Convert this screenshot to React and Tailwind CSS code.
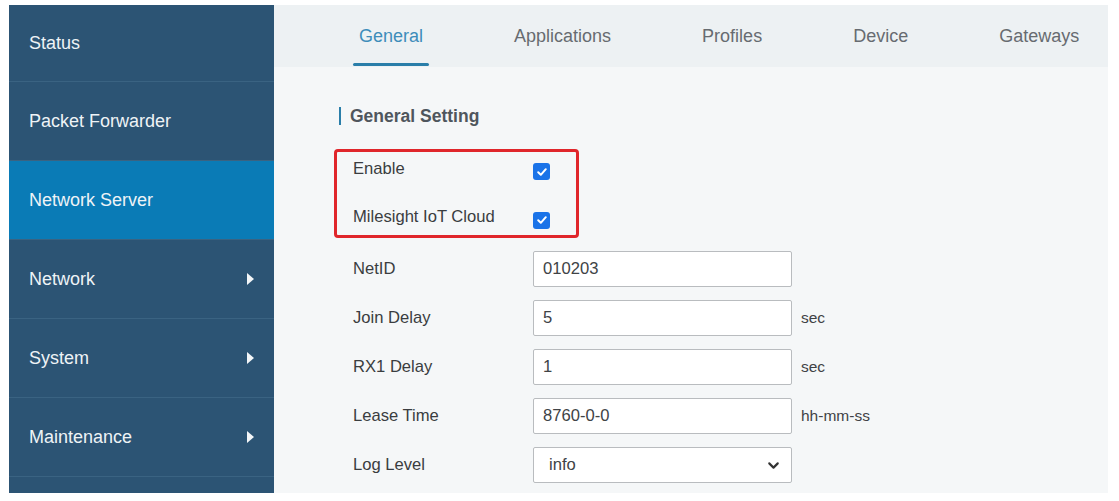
import { ChevronDown } from 'lucide-react'

const menu = [
  { label: 'Status', h: 'h-[77px]' },
  { label: 'Packet Forwarder' },
  { label: 'Network Server', active: true },
  { label: 'Network', arrow: true },
  { label: 'System', arrow: true },
  { label: 'Maintenance', arrow: true },
]

const tabs = ['General', 'Applications', 'Profiles', 'Device', 'Gateways']

const fields = [
  { label: 'NetID', value: '010203' },
  { label: 'Join Delay', value: '5', unit: 'sec' },
  { label: 'RX1 Delay', value: '1', unit: 'sec' },
  { label: 'Lease Time', value: '8760-0-0', unit: 'hh-mm-ss' },
]

const Check = () => (
  <div className="w-[17px] h-[17px] rounded-[3px] bg-[#1a73e8] flex items-center justify-center">
    <svg width="12" height="12" viewBox="0 0 12 12" fill="none">
      <path d="M2.2 6.3 L4.8 8.8 L9.8 3.2" stroke="white" strokeWidth="2" strokeLinecap="round" strokeLinejoin="round" />
    </svg>
  </div>
)

const Arrow = () => (
  <svg width="9" height="14" viewBox="0 0 9 14" className="mr-[19px]">
    <path d="M1 1 L8 7 L1 13 Z" fill="#f3f6f8" />
  </svg>
)

export default function App() {
  return (
    <div className="w-[1119px] h-[501px] bg-white pt-[5px] pl-[9px] flex font-['Liberation_Sans',Arial,sans-serif] overflow-hidden">
      {/* sidebar */}
      <div className="w-[265px] h-[488px] bg-[#2c5474] flex flex-col">
        {menu.map((m) => (
          <div
            key={m.label}
            className={`${m.h || 'h-[79px]'} shrink-0 flex items-center justify-between pl-[20px] text-[18px] text-[#eef3f6] border-b border-[#3a6382] ${m.active ? 'bg-[#0a7bb6] border-[#0a7bb6]' : ''}`}
          >
            <span>{m.label}</span>
            {m.arrow && <Arrow />}
          </div>
        ))}
        <div className="flex-1" />
      </div>

      {/* main panel */}
      <div className="w-[834px] h-[488px] bg-[#f5f7f8] flex flex-col">
        <div className="h-[62px] bg-[#edf1f3] flex items-stretch pl-[79px] gap-[79px]">
          {tabs.map((t, i) => (
            <div
              key={t}
              className={`px-[6px] flex items-center text-[18px] pt-[1px] relative ${i === 0 ? 'text-[#3d8dba]' : 'text-[#676b70]'}`}
            >
              {t}
              {i === 0 && <div className="absolute left-0 right-0 bottom-[1px] h-[3px] bg-[#2a7ea9] rounded-full" />}
            </div>
          ))}
        </div>

        <div className="pl-[65px] pt-[39px]">
          <div className="flex items-center h-[20px]">
            <div className="w-[2px] h-[18px] bg-[#2a7ea9]" />
            <span className="ml-[9px] text-[17.5px] font-bold text-[#4f565d]">General Setting</span>
          </div>
        </div>

        <div className="ml-[60px] mt-[23px] w-[245px] h-[89px] border-[3px] border-[#e0262b] rounded-[4px] flex flex-col pl-[16px] pt-[5px] text-[16.6px] text-[#3a3d40]">
          <div className="flex items-center h-[31px]">
            <span className="w-[180px] -mt-[4px]">Enable</span>
            <Check />
          </div>
          <div className="flex items-center h-[31px] mt-[19px]">
            <span className="w-[180px] -mt-[5px]">Milesight IoT Cloud</span>
            <Check />
          </div>
        </div>

        <div className="ml-[79px] mt-[13px] flex flex-col gap-[13px] text-[16.6px] text-[#3a3d40]">
          {fields.map((f) => (
            <div key={f.label} className="flex items-center h-[36px]">
              <span className="w-[180px]">{f.label}</span>
              <div className="w-[259px] h-[36px] bg-white border border-[#b9bcbf] rounded-[2px] flex items-center pl-[9px] text-[#404346]">
                {f.value}
              </div>
              {f.unit && <span className="ml-[9px] text-[15.5px] text-[#3f4245]">{f.unit}</span>}
            </div>
          ))}
          <div className="flex items-center h-[36px]">
            <span className="w-[180px]">Log Level</span>
            <div className="w-[259px] h-[36px] bg-white border border-[#b9bcbf] rounded-[2px] flex items-center justify-between pl-[15px] pr-[9px] text-[#404346]">
              <span>info</span>
              <ChevronDown size={17} strokeWidth={3} className="text-[#333]" />
            </div>
          </div>
        </div>
      </div>
    </div>
  )
}
